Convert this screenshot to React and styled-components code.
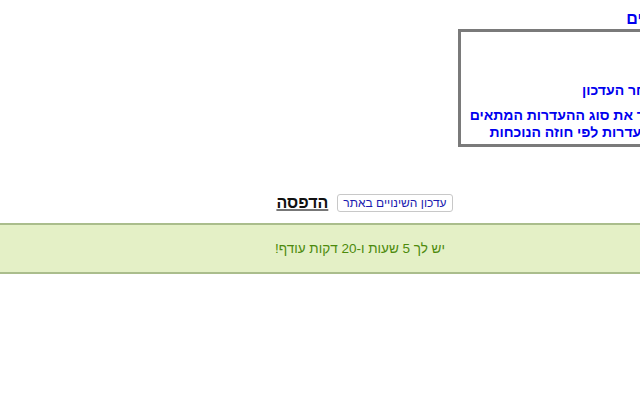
import React from 'react';
import styled, { createGlobalStyle } from 'styled-components';

const GlobalStyle = createGlobalStyle`
    html, body {
        margin: 0;
        padding: 0;
        overflow: hidden;
        background: #FFFFFF;
    }
`
const Page = styled.div`
    width: 720px;
    direction: rtl;
    font-family: "Liberation Sans", Arial, sans-serif;
`
const Title = styled.h2`
    margin: 0;
    padding: 9px 6px 0;
    font-size: 16px;
    line-height: 20px;
    font-weight: bold;
    color: #0000EE;
    white-space: nowrap;
`
const InfoBox = styled.div`
    box-sizing: border-box;
    width: 250px;
    margin-right: 12px;
    border: 3px solid #7A7A7A;
    padding: 5px 10px 3px;
    color: #0000EE;
    font-size: 14px;
    font-weight: bold;
    line-height: 17px;
    white-space: nowrap;
    overflow: hidden;
`
const Paragraph = styled.p`
    margin: ${({ gap }) => gap || 0}px 0 0;
`
const Actions = styled.div`
    display: flex;
    justify-content: center;
    align-items: center;
    gap: 9px;
    margin-top: 47px;
    padding-left: 9px;
`
const UpdateButton = styled.button`
    font-family: "Liberation Sans", Arial, sans-serif;
    font-size: 12px;
    line-height: 14px;
    color: #1A1AB0;
    background: #FFFFFF;
    border: 1px solid #C8C8C8;
    border-radius: 3px;
    padding: 1px 5px;
    cursor: pointer;
`
const PrintLink = styled.a`
    font-size: 16px;
    font-weight: bold;
    color: #111111;
    text-decoration: underline;
    text-decoration-color: #777777;
    text-decoration-thickness: 2px;
    cursor: pointer;
`
const Notice = styled.div`
    margin-top: 11px;
    height: 47px;
    display: flex;
    align-items: center;
    justify-content: center;
    background: #E4F0C6;
    border-top: 2px solid #AABD8C;
    border-bottom: 2px solid #AABD8C;
    color: #4C8A0C;
    font-size: 13.5px;
`

const App = () => {
    return (
        <>
            <GlobalStyle />
            <Page>
                <Title>עדכון נתונים</Title>
                <InfoBox>
                    <Paragraph>לשים לב</Paragraph>
                    <Paragraph gap={28}>מצב לאחר העדכון</Paragraph>
                    <Paragraph gap={8}>
                        יש לבחור את סוג ההעדרות המתאים<br />
                        ולעדכן העדרות לפי חוזה הנוכחות
                    </Paragraph>
                </InfoBox>
                <Actions>
                    <UpdateButton>עדכון השינויים באתר</UpdateButton>
                    <PrintLink>הדפסה</PrintLink>
                </Actions>
                <Notice>יש לך 5 שעות ו-20 דקות עודף!</Notice>
            </Page>
        </>
    )
}

export default App;
